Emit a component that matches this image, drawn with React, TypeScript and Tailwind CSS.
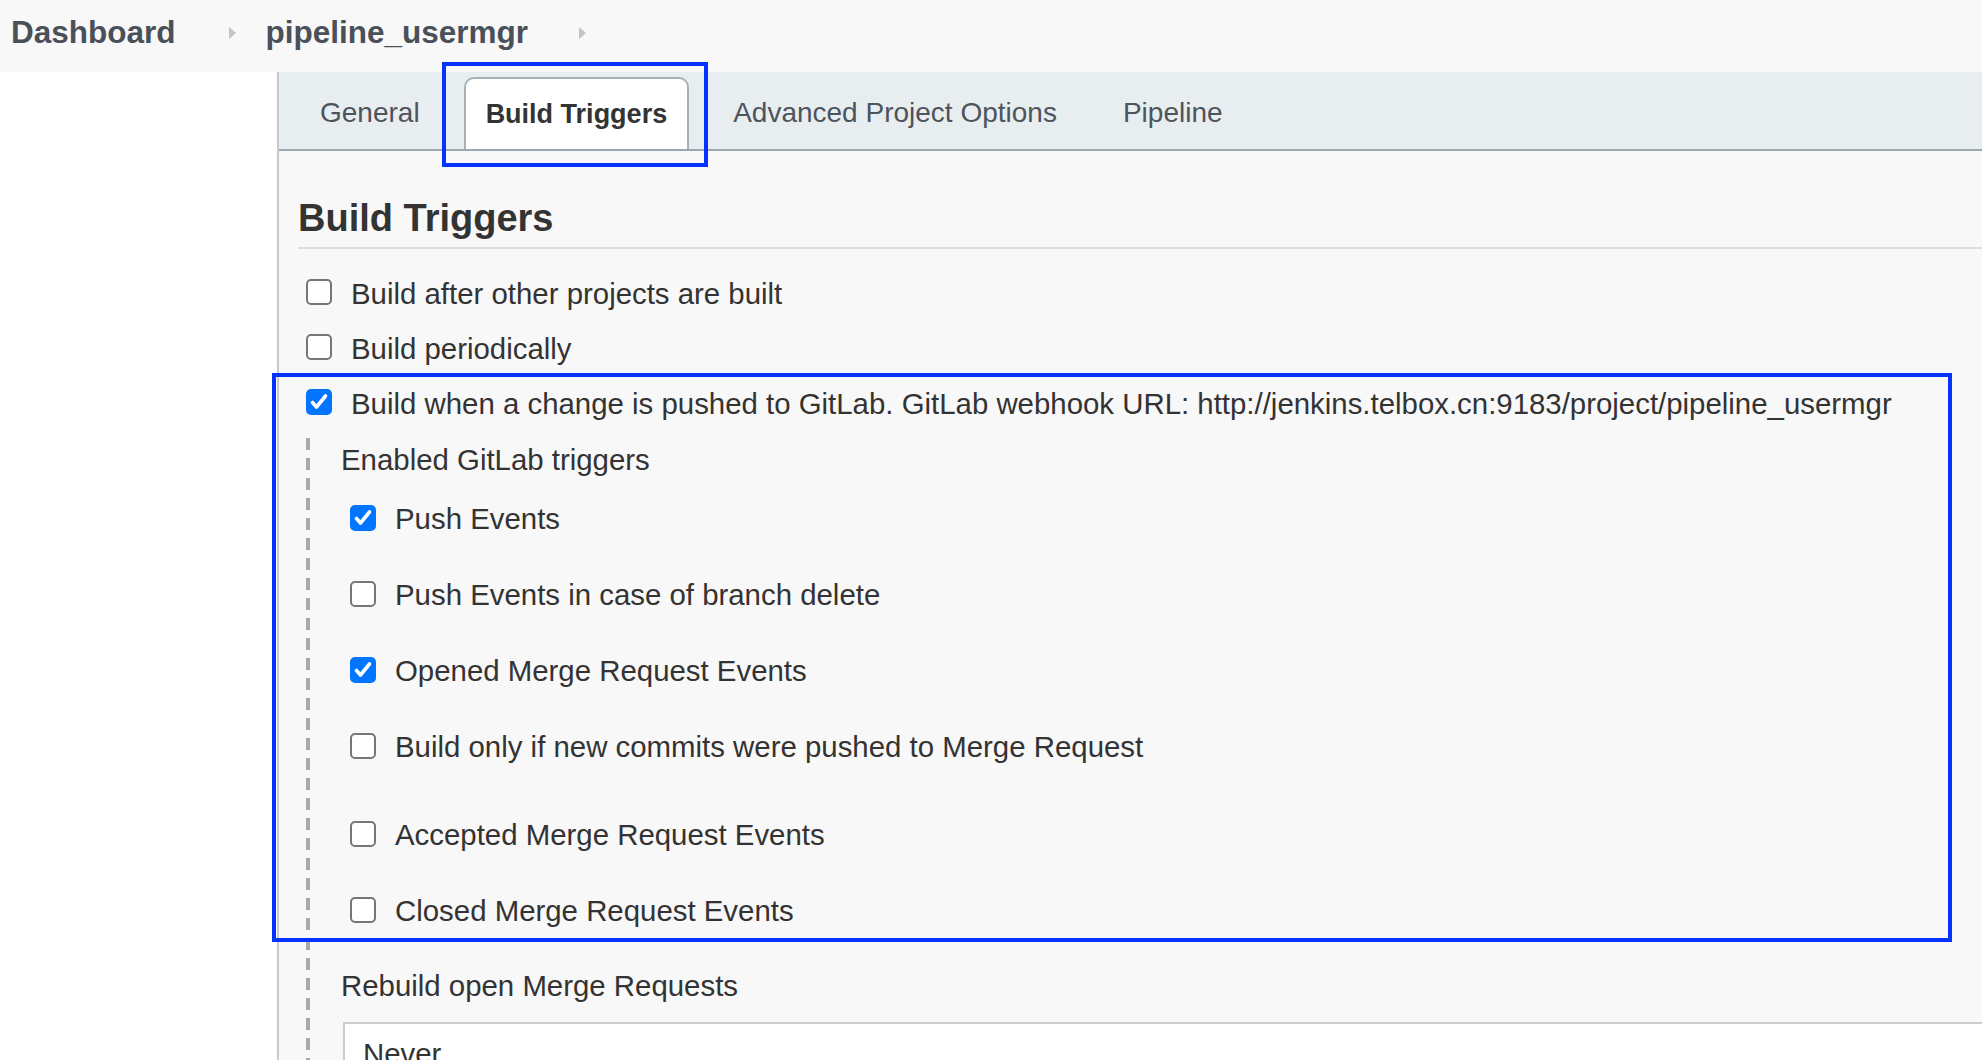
import React from "react";

const Check = ({ checked }: { checked?: boolean }) =>
  checked ? (
    <span className="w-[26px] h-[26px] rounded-[5px] bg-[#0075ff] flex items-center justify-center shrink-0">
      <svg width="26" height="26" viewBox="0 0 26 26">
        <path d="M6.5 13.5l4 4.5 9-11" fill="none" stroke="#fff" strokeWidth="3.6" strokeLinecap="round" strokeLinejoin="round" />
      </svg>
    </span>
  ) : (
    <span className="w-[26px] h-[26px] rounded-[5px] border-2 border-[#767676] bg-white shrink-0" />
  );

const Chevron = () => (
  <svg width="7" height="12" viewBox="0 0 7 12" className="shrink-0">
    <polygon points="0,0 7,6 0,12" fill="#c4c4c4" />
  </svg>
);

const triggers: { label: string; checked?: boolean; extra?: boolean }[] = [
  { label: "Push Events", checked: true },
  { label: "Push Events in case of branch delete" },
  { label: "Opened Merge Request Events", checked: true },
  { label: "Build only if new commits were pushed to Merge Request" },
  { label: "Accepted Merge Request Events", extra: true },
  { label: "Closed Merge Request Events" },
];

export default function App() {
  return (
    <div className="relative w-[1982px] h-[1060px] overflow-hidden bg-white text-[#333] font-['Liberation_Sans',Arial,sans-serif]">
      {/* breadcrumb */}
      <div className="h-[72px] bg-[#f8f8f8]">
        <div className="h-[66px] flex items-center pl-[11px] text-[31.5px] font-bold text-[#4a5059]">
          <span>Dashboard</span>
          <span className="ml-[53px] mr-[30px] flex"><Chevron /></span>
          <span>pipeline_usermgr</span>
          <span className="ml-[51px] flex"><Chevron /></span>
        </div>
      </div>

      <div className="flex h-[988px]">
        <div className="w-[277px] shrink-0 bg-white" />
        <div className="flex-1 flex flex-col border-l-2 border-[#c8c8c8] bg-[#f8f8f8]">
          {/* tabs */}
          <div className="h-[79px] shrink-0 flex items-end gap-[22px] pl-[19px] bg-[#e8edf0] border-b-2 border-[#9ca8b0]">
            <div className="h-[72px] px-[22px] flex items-center text-[28px] text-[#4d545d]">General</div>
            <div className="h-[72px] px-[20px] flex items-center bg-white border-2 border-b-0 border-[#a5b0b8] rounded-t-[10px] text-[27px] font-bold text-[#333]">
              Build Triggers
            </div>
            <div className="h-[72px] px-[22px] flex items-center text-[28px] text-[#4d545d]">Advanced Project Options</div>
            <div className="h-[72px] px-[22px] flex items-center text-[28px] text-[#4d545d]">Pipeline</div>
          </div>

          <div className="pl-[19px] flex flex-col">
            <h2 className="mt-[38px] h-[60px] border-b-2 border-[#dedede] text-[38px] font-bold leading-[58px] text-[#333]">
              Build Triggers
            </h2>

            <div className="mt-[15px] flex flex-col text-[29.4px] leading-none">
              <label className="h-[55px] flex items-center gap-[19px] pl-[8px]">
                <Check />
                <span className="pt-[5px]">Build after other projects are built</span>
              </label>
              <label className="h-[55px] flex items-center gap-[19px] pl-[8px]">
                <Check />
                <span className="pt-[5px]">Build periodically</span>
              </label>
              <label className="h-[55px] flex items-center gap-[19px] pl-[8px]">
                <Check checked />
                <span className="pt-[5px] whitespace-nowrap">
                  Build when a change is pushed to GitLab. GitLab webhook URL: http://jenkins.telbox.cn:9183/project/pipeline_usermgr
                </span>
              </label>

              {/* nested gitlab options */}
              <div className="mt-[9px] ml-[8px] flex">
                <div className="w-[4px] shrink-0 bg-[image:repeating-linear-gradient(to_bottom,#a9a9a9_0px,#a9a9a9_12px,transparent_12px,transparent_20px)]" />
                <div className="flex-1 pl-[31px] flex flex-col">
                  <div className="h-[42px] flex items-center pt-[2px]">Enabled GitLab triggers</div>
                  {triggers.map((t) => (
                    <label
                      key={t.label}
                      className={`h-[76px] flex items-center gap-[19px] pl-[9px] ${t.extra ? "mt-[12px]" : ""}`}
                    >
                      <Check checked={t.checked} />
                      <span className="pt-[2px]">{t.label}</span>
                    </label>
                  ))}
                  <div className="h-[74px] flex items-center pt-[2px]">Rebuild open Merge Requests</div>
                  <div className="ml-[2px] -mr-[20px] h-[64px] flex items-center pl-[18px] bg-white border-2 border-[#cccccc]">
                    Never
                  </div>
                </div>
              </div>
            </div>
          </div>
        </div>
      </div>

      {/* annotation highlights */}
      <div className="absolute left-[442px] top-[62px] w-[266px] h-[105px] border-4 border-[#0433ff] pointer-events-none" />
      <div className="absolute left-[272px] top-[373px] w-[1680px] h-[569px] border-4 border-[#0433ff] pointer-events-none" />
    </div>
  );
}
